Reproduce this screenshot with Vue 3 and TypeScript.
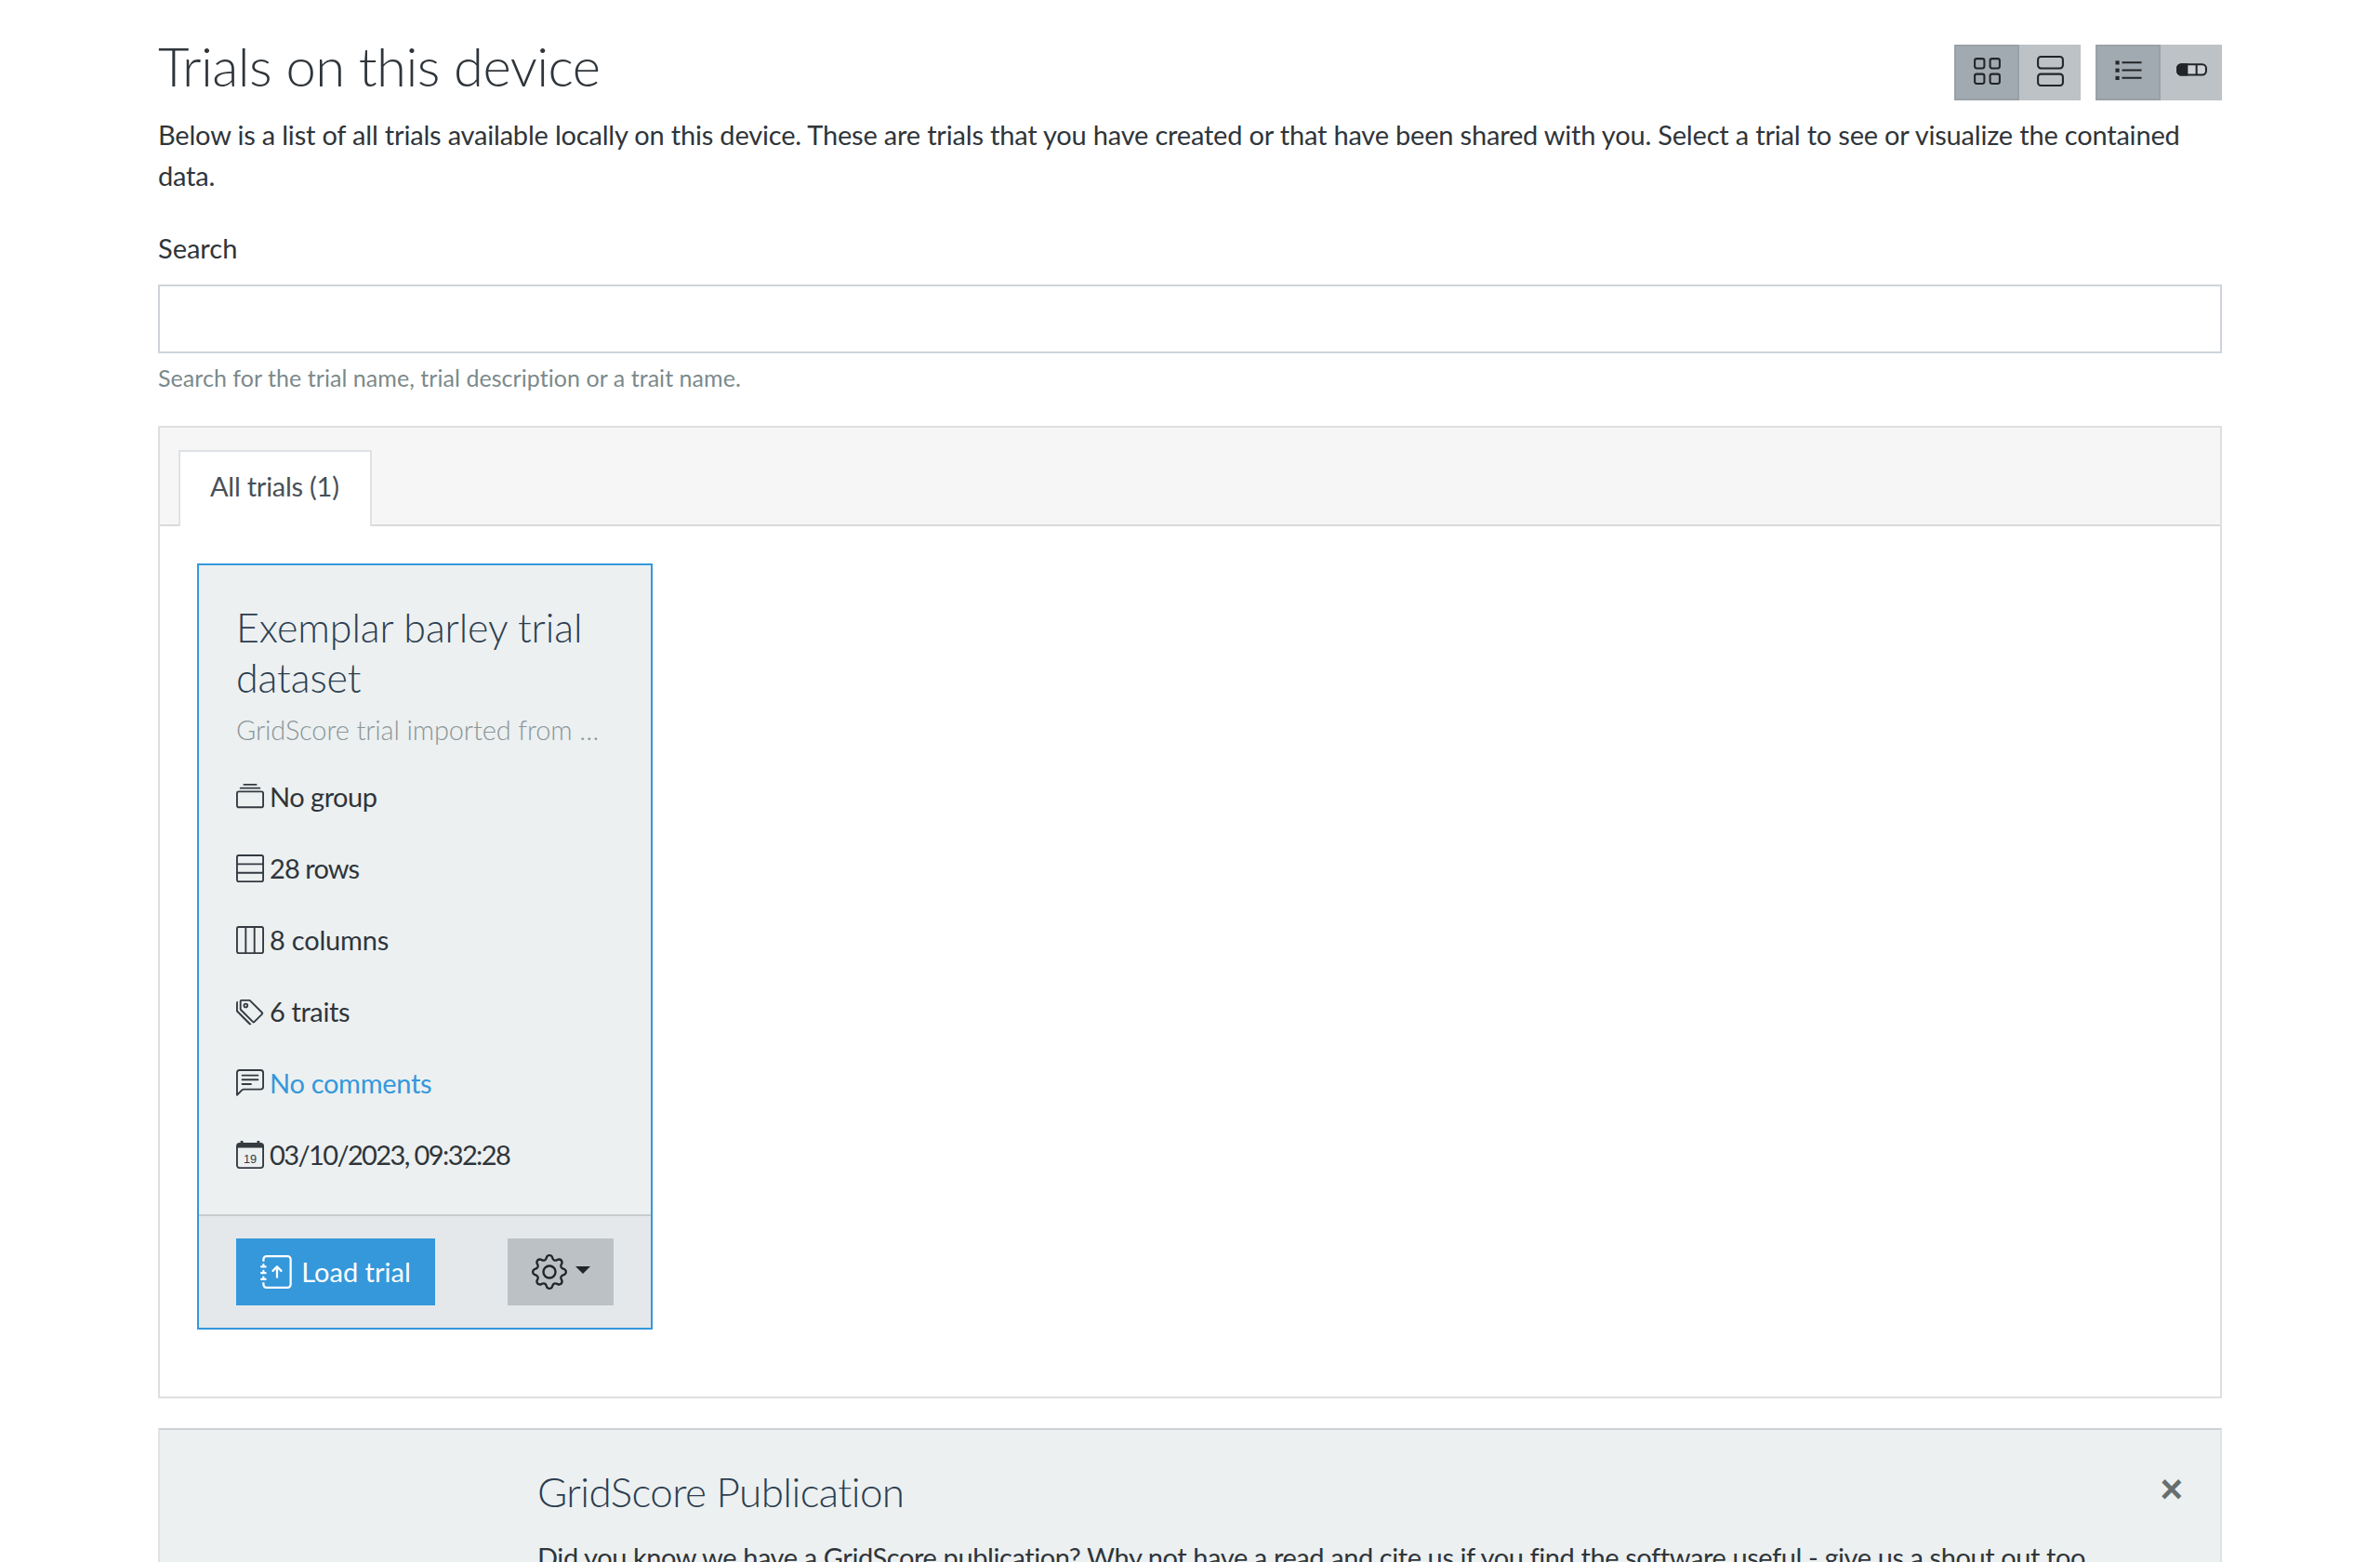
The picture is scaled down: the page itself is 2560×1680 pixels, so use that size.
<template>
  <div class="page">
    <div class="head-row">
      <h1>Trials on this device</h1>
      <div class="toolbar">
        <div class="btn-group">
          <button class="tool active">
            <svg viewBox="0 0 16 16" class="tool-icon" fill="none" stroke="currentColor">
              <rect x="1.5" y="1.5" width="5" height="5" rx="1" />
              <rect x="9.5" y="1.5" width="5" height="5" rx="1" />
              <rect x="1.5" y="9.5" width="5" height="5" rx="1" />
              <rect x="9.5" y="9.5" width="5" height="5" rx="1" />
            </svg>
          </button>
          <button class="tool">
            <svg viewBox="0 0 16 16" class="tool-icon" fill="none" stroke="currentColor">
              <rect x="1.5" y="0.5" width="13" height="6" rx="1.5" />
              <rect x="1.5" y="9.5" width="13" height="6" rx="1.5" />
            </svg>
          </button>
        </div>
        <div class="btn-group">
          <button class="tool active">
            <svg viewBox="0 0 16 16" class="tool-icon" fill="none" stroke="currentColor">
              <path d="M4.600 3.500h10.200M4.600 7.500h10.200M4.600 11.500h10.200" />
              <rect x="1.600" y="3" width="1.200" height="1.200" stroke-width="0.8" />
              <rect x="1.600" y="7" width="1.200" height="1.200" stroke-width="0.8" />
              <rect x="1.600" y="11" width="1.200" height="1.200" stroke-width="0.8" />
            </svg>
          </button>
          <button class="tool">
            <svg viewBox="0 0 16 16" class="tool-icon" fill="none" stroke="currentColor">
              <rect x="0.500" y="4.500" width="15" height="5.400" rx="2" fill="#cdd1d4" />
              <path d="M0.500 6.500a2 2 0 0 1 2-2H5.500v5.400H2.500a2 2 0 0 1-2-2z" fill="currentColor" />
              <path d="M10.500 4.500v5.400" />
            </svg>
          </button>
        </div>
      </div>
    </div>
    <p class="lead">Below is a list of all trials available locally on this device. These are trials that you have created or that have been shared with you. Select a trial to see or visualize the contained data.</p>

    <label class="field-label" for="search">Search</label>
    <input id="search" v-model="search" class="search" type="text" />
    <small class="hint">Search for the trial name, trial description or a trait name.</small>

    <section class="panel">
      <div class="tabs">
        <a class="tab">All trials (1)</a>
      </div>
      <div class="panel-body">
        <article class="card">
          <div class="card-body">
            <h4>Exemplar barley trial dataset</h4>
            <div class="desc">GridScore trial imported from …</div>
            <div v-for="row in rows" :key="row.text" class="meta" :class="{ link: row.link }">
              <svg viewBox="0 0 16 16" class="meta-icon" fill="#343a40" v-html="row.icon"></svg>
              <span :style="{ letterSpacing: row.spacing + 'px' }">{{ row.text }}</span>
            </div>
          </div>
          <div class="card-foot">
            <button class="load">
              <svg viewBox="0 0 16 16" class="load-icon" fill="#fff">
                <path fill-rule="evenodd" d="M8 11a.5.5 0 0 0 .5-.5V6.707l1.146 1.147a.5.5 0 0 0 .708-.708l-2-2a.5.5 0 0 0-.708 0l-2 2a.5.5 0 1 0 .708.708L7.500 6.707V10.500A.5.5 0 0 0 8 11z" />
                <path d="M3 0h10a2 2 0 0 1 2 2v12a2 2 0 0 1-2 2H3a2 2 0 0 1-2-2v-1h1v1a1 1 0 0 0 1 1h10a1 1 0 0 0 1-1V2a1 1 0 0 0-1-1H3a1 1 0 0 0-1 1v1H1V2a2 2 0 0 1 2-2z" />
                <path d="M1 5v-.5a.5.500 0 0 1 1 0V5h.500a.5.500 0 0 1 0 1h-2a.5.500 0 0 1 0-1H1zm0 3v-.5a.5.500 0 0 1 1 0V8h.500a.5.500 0 0 1 0 1h-2a.5.500 0 0 1 0-1H1zm0 3v-.5a.5.500 0 0 1 1 0v.5h.500a.5.500 0 0 1 0 1h-2a.5.500 0 0 1 0-1H1z" />
              </svg>
              <span>Load trial</span>
            </button>
            <button class="settings">
              <svg viewBox="0 0 16 16" class="gear" fill="#212529">
                <path d="M8 4.754a3.246 3.246 0 1 0 0 6.492 3.246 3.246 0 0 0 0-6.492zM5.754 8a2.246 2.246 0 1 1 4.492 0 2.246 2.246 0 0 1-4.492 0z" />
                <path d="M9.796 1.343c-.527-1.790-3.065-1.790-3.592 0l-.094.319a.873.873 0 0 1-1.255.52l-.292-.16c-1.640-.892-3.433.902-2.540 2.541l.159.292a.873.873 0 0 1-.52 1.255l-.319.094c-1.790.527-1.790 3.065 0 3.592l.319.094a.873.873 0 0 1 .52 1.255l-.16.292c-.892 1.640.901 3.434 2.541 2.540l.292-.159a.873.873 0 0 1 1.255.52l.094.319c.527 1.790 3.065 1.790 3.592 0l.094-.319a.873.873 0 0 1 1.255-.52l.292.16c1.640.893 3.434-.902 2.540-2.541l-.159-.292a.873.873 0 0 1 .52-1.255l.319-.094c1.790-.527 1.790-3.065 0-3.592l-.319-.094a.873.873 0 0 1-.52-1.255l.16-.292c.893-1.640-.902-3.433-2.541-2.540l-.292.159a.873.873 0 0 1-1.255-.52l-.094-.319zm-2.633.283c.246-.835 1.428-.835 1.674 0l.094.319a1.873 1.873 0 0 0 2.693 1.115l.291-.16c.764-.415 1.600.42 1.184 1.185l-.159.292a1.873 1.873 0 0 0 1.116 2.692l.318.094c.835.246.835 1.428 0 1.674l-.319.094a1.873 1.873 0 0 0-1.115 2.693l.16.291c.415.764-.42 1.600-1.185 1.184l-.291-.159a1.873 1.873 0 0 0-2.693 1.116l-.094.318c-.246.835-1.428.835-1.674 0l-.094-.319a1.873 1.873 0 0 0-2.692-1.115l-.292.16c-.764.415-1.600-.42-1.184-1.185l.159-.291A1.873 1.873 0 0 0 1.945 8.930l-.319-.094c-.835-.246-.835-1.428 0-1.674l.319-.094A1.873 1.873 0 0 0 3.060 4.377l-.16-.292c-.415-.764.42-1.600 1.185-1.184l.292.159a1.873 1.873 0 0 0 2.692-1.115l.094-.319z" />
              </svg>
              <span class="caret"></span>
            </button>
          </div>
        </article>
      </div>
    </section>

    <section class="notice">
      <h3>GridScore Publication</h3>
      <button class="close">&times;</button>
      <p>Did you know we have a GridScore publication? Why not have a read and cite us if you find the software useful - give us a shout out too.</p>
    </section>
  </div>
</template>

<script setup lang="ts">
import { ref } from 'vue'

interface MetaRow {
  text: string
  icon: string
  spacing: number
  link?: boolean
}

const search = ref('')

const rows: MetaRow[] = [
  {
    text: 'No group',
    spacing: -0.5,
    icon: '<path d="M2.500 3.500a.5.5 0 0 1 0-1h11a.5.5 0 0 1 0 1h-11zm2-2a.5.5 0 0 1 0-1h7a.5.5 0 0 1 0 1h-7zM0 13a1.500 1.500 0 0 0 1.500 1.500h13A1.500 1.500 0 0 0 16 13V6a1.500 1.500 0 0 0-1.500-1.500h-13A1.500 1.500 0 0 0 0 6v7zm1.500.5A.5.5 0 0 1 1 13V6a.5.5 0 0 1 .5-.5h13a.5.5 0 0 1 .5.500v7a.5.5 0 0 1-.5.5h-13z"/>'
  },
  {
    text: '28 rows',
    spacing: -0.9,
    icon: '<path d="M1.500 0A1.500 1.500 0 0 0 0 1.500v13A1.500 1.500 0 0 0 1.500 16h13a1.500 1.500 0 0 0 1.500-1.500v-13A1.500 1.500 0 0 0 14.500 0h-13zM1 1.500a.5.5 0 0 1 .5-.5h13a.5.5 0 0 1 .5.500V5H1V1.500zM1 6h14v4H1V6zm0 5h14v3.500a.5.5 0 0 1-.5.5h-13a.5.5 0 0 1-.5-.5V11z"/>'
  },
  {
    text: '8 columns',
    spacing: -0.2,
    icon: '<path d="M1.500 0A1.500 1.500 0 0 0 0 1.500v13A1.500 1.500 0 0 0 1.500 16h13a1.500 1.500 0 0 0 1.500-1.500v-13A1.500 1.500 0 0 0 14.500 0h-13zM1 1.500a.5.5 0 0 1 .5-.5H5v14H1.500a.5.5 0 0 1-.5-.5v-13zM6 1h4v14H6V1zm5 0h3.500a.5.5 0 0 1 .5.500v13a.5.5 0 0 1-.5.5H11V1z"/>'
  },
  {
    text: '6 traits',
    spacing: -0.4,
    icon: '<path d="M3 2v4.586l7 7L14.586 9l-7-7H3zM2 2a1 1 0 0 1 1-1h4.586a1 1 0 0 1 .707.293l7 7a1 1 0 0 1 0 1.414l-4.586 4.586a1 1 0 0 1-1.414 0l-7-7A1 1 0 0 1 2 6.586V2z"/><path d="M5.500 5a.5.5 0 1 1 0-1 .5.5 0 0 1 0 1zm0 1a1.500 1.500 0 1 0 0-3 1.500 1.500 0 0 0 0 3zM1 7.086a1 1 0 0 0 .293.707L8.750 15.250l-.043.043a1 1 0 0 1-1.414 0l-7-7A1 1 0 0 1 0 7.586V3a1 1 0 0 1 1-1v5.086z"/>'
  },
  {
    text: 'No comments',
    spacing: -0.3,
    link: true,
    icon: '<path d="M14 1a1 1 0 0 1 1 1v8a1 1 0 0 1-1 1H4.414A2 2 0 0 0 3 11.586l-2 2V2a1 1 0 0 1 1-1h12zM2 0a2 2 0 0 0-2 2v12.793a.5.5 0 0 0 .854.353l2.853-2.853A1 1 0 0 1 4.414 12H14a2 2 0 0 0 2-2V2a2 2 0 0 0-2-2H2z"/><path d="M3 3.500a.5.5 0 0 1 .5-.5h9a.5.5 0 0 1 0 1h-9a.5.5 0 0 1-.5-.5zM3 6a.5.5 0 0 1 .5-.5h9a.5.5 0 0 1 0 1h-9A.5.5 0 0 1 3 6zm0 2.500a.5.5 0 0 1 .5-.5h5a.5.5 0 0 1 0 1h-5a.5.5 0 0 1-.5-.5z"/>'
  },
  {
    text: '03/10/2023, 09:32:28',
    spacing: -1.6,
    icon: '<path d="M2.500 0h1.500v1.500H2.500zM12 0h1.500v1.500H12z"/><path fill-rule="evenodd" d="M2 1h12a2 2 0 0 1 2 2v11a2 2 0 0 1-2 2H2a2 2 0 0 1-2-2V3a2 2 0 0 1 2-2zM1 4v10a1 1 0 0 0 1 1h12a1 1 0 0 0 1-1V4H1z"/><text x="8" y="12.800" font-size="6.800" text-anchor="middle" font-family="Liberation Sans, sans-serif">19</text>'
  }
]
</script>

<style scoped>
.page {
  height: 1680px;
  overflow: hidden;
  padding: 0 170px;
  box-sizing: border-box;
  font-family: Lato, "Noto Sans", sans-serif;
  font-size: 29px;
  line-height: 44px;
  color: #2f353a;
}

.head-row {
  display: flex;
  justify-content: space-between;
  align-items: flex-start;
  height: 123px;
  padding-top: 36px;
  box-sizing: border-box;
}

h1 {
  margin: 0;
  font-size: 58px;
  font-weight: 300;
  line-height: 70px;
  letter-spacing: -0.55px;
}

.toolbar {
  display: flex;
  gap: 16px;
  margin-top: 12px;
}

.btn-group {
  display: flex;
}

.tool {
  width: 66px;
  height: 60px;
  padding: 0 0 3px;
  border: 0;
  background: #bdc2c6;
  color: #212529;
  display: flex;
  align-items: center;
  justify-content: center;
  box-sizing: border-box;
}

.tool.active {
  width: 70px;
  background: #a2aab1;
  border: 2px solid #99a1a8;
}

.tool-icon {
  width: 33px;
  height: 33px;
  stroke-width: 1;
  flex: none;
}

.lead {
  margin: 0 0 34px;
  letter-spacing: -0.19px;
}

.field-label {
  display: block;
  margin-bottom: 17px;
}

.search {
  display: block;
  width: 100%;
  height: 74px;
  box-sizing: border-box;
  border: 2px solid #ced4da;
  background: #fff;
  outline: none;
  font: inherit;
}

.hint {
  display: block;
  margin-top: 7px;
  font-size: 25px;
  line-height: 38px;
  color: #7b8a8b;
  letter-spacing: 0.05px;
}

.panel {
  margin-top: 33px;
  border: 2px solid #dfdfdf;
  height: 1046px;
  box-sizing: border-box;
}

.tabs {
  height: 106px;
  box-sizing: border-box;
  background: #f6f6f6;
  border-bottom: 2px solid #dadada;
  padding: 24px 0 0 20px;
}

.tab {
  display: inline-block;
  width: 208px;
  height: 82px;
  box-sizing: border-box;
  border: 2px solid #dee2e6;
  border-bottom: 0;
  background: #fff;
  color: #495057;
  padding: 15px 0 0 32px;
  letter-spacing: -0.25px;
}

.panel-body {
  padding: 40px 40px;
}

.card {
  width: 490px;
  height: 824px;
  box-sizing: border-box;
  border: 2px solid #3498db;
  background: #ecf0f1;
  display: flex;
  flex-direction: column;
}

.card-body {
  flex: 1;
  padding: 40px 40px 0;
}

h4 {
  margin: 0;
  font-size: 43px;
  font-weight: 300;
  line-height: 54px;
  letter-spacing: -0.1px;
  color: #2c3e50;
}

.desc {
  margin: 7px 0 11px;
  font-weight: 300;
  color: #8b9698;
  white-space: nowrap;
  overflow: hidden;
  letter-spacing: -0.15px;
}

.meta {
  display: flex;
  align-items: center;
  gap: 6px;
  height: 77px;
}

.meta.link {
  color: #3498db;
}

.meta-icon {
  width: 30px;
  height: 30px;
  flex: none;
}

.card-foot {
  height: 122px;
  box-sizing: border-box;
  border-top: 2px solid #c7cccf;
  background: #e4e8ea;
  padding: 24px 40px 0;
  display: flex;
  justify-content: space-between;
  align-items: flex-start;
}

.load,
.settings {
  height: 72px;
  border: 0;
  padding: 0;
  display: flex;
  align-items: center;
  justify-content: center;
  font: inherit;
}

.load {
  width: 214px;
  gap: 8px;
  background: #3498db;
  color: #fff;
}

.load-icon {
  width: 36px;
  height: 38px;
}

.settings {
  width: 114px;
  gap: 9px;
  background: #bcc1c5;
}

.gear {
  width: 38px;
  height: 38px;
}

.caret {
  width: 0;
  height: 0;
  border-left: 8px solid transparent;
  border-right: 8px solid transparent;
  border-top: 8px solid #212529;
  margin-top: -4px;
}

.notice {
  position: relative;
  margin-top: 32px;
  padding: 38px 0 0 406px;
  min-height: 300px;
  border: 2px solid #dfe3e4;
  border-top-color: #ccd1d3;
  background: #ecf0f1;
}

h3 {
  margin: 0;
  font-size: 44px;
  font-weight: 300;
  line-height: 56px;
  letter-spacing: -0.6px;
  color: #2c3e50;
}

.notice p {
  margin: 21px 0 0;
  letter-spacing: -0.41px;
}

.close {
  position: absolute;
  top: 36px;
  right: 40px;
  border: 0;
  background: none;
  padding: 0;
  font-family: "Liberation Sans", sans-serif;
  font-size: 42px;
  font-weight: 700;
  line-height: 56px;
  color: #666f70;
}
</style>

<style>
html,
body {
  margin: 0;
  background: #fff;
}
</style>
